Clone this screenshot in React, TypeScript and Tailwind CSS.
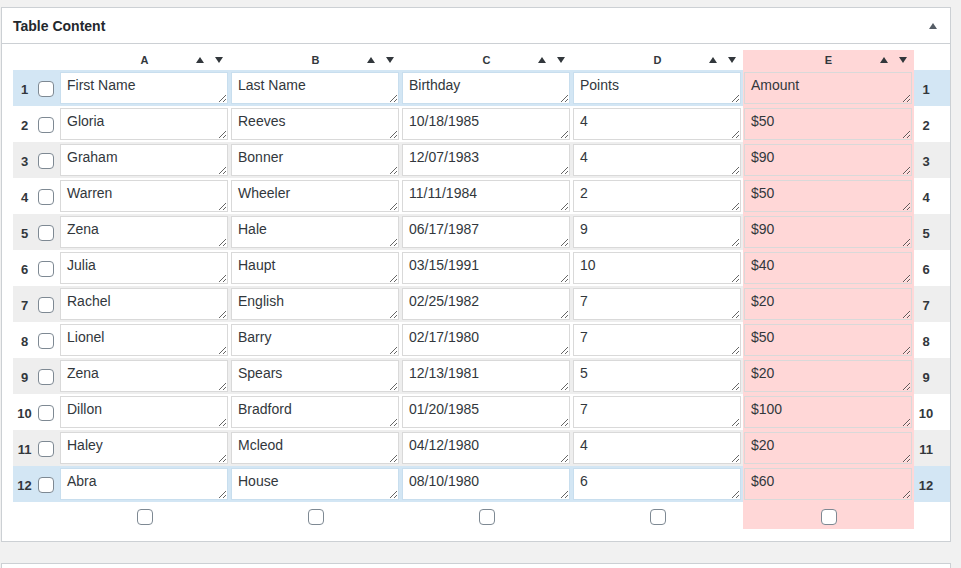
import React from 'react';

const rows: string[][] = [
    ['First Name', 'Last Name', 'Birthday', 'Points', 'Amount'],
    ['Gloria', 'Reeves', '10/18/1985', '4', '$50'],
    ['Graham', 'Bonner', '12/07/1983', '4', '$90'],
    ['Warren', 'Wheeler', '11/11/1984', '2', '$50'],
    ['Zena', 'Hale', '06/17/1987', '9', '$90'],
    ['Julia', 'Haupt', '03/15/1991', '10', '$40'],
    ['Rachel', 'English', '02/25/1982', '7', '$20'],
    ['Lionel', 'Barry', '02/17/1980', '7', '$50'],
    ['Zena', 'Spears', '12/13/1981', '5', '$20'],
    ['Dillon', 'Bradford', '01/20/1985', '7', '$100'],
    ['Haley', 'Mcleod', '04/12/1980', '4', '$20'],
    ['Abra', 'House', '08/10/1980', '6', '$60'],
];

const letters = ['A', 'B', 'C', 'D', 'E'];

const gridCols = 'grid grid-cols-[23px_23px_repeat(5,171px)_24px]';

const Checkbox: React.FC = () => (
    <input
        type="checkbox"
        className="appearance-none w-[16px] h-[16px] rounded-[4px] border border-[#7e8993] bg-white m-0 block"
    />
);

const SortArrows: React.FC = () => (
    <div className="flex items-center justify-end gap-[11px] pr-[7px]">
        <svg width="8" height="6" viewBox="0 0 8 6"><path d="M4 0 L8 6 L0 6 Z" fill="#32373c" /></svg>
        <svg width="8" height="6" viewBox="0 0 8 6"><path d="M0 0 L8 0 L4 6 Z" fill="#32373c" /></svg>
    </div>
);

const App: React.FC = () => {
    return (
        <div className="h-[568px] overflow-hidden bg-[#f1f1f1] pt-[7px] pl-px" style={{ fontFamily: '"Liberation Sans", Arial, sans-serif' }}>
            <div className="w-[950px] bg-white border border-[#ccd0d4]">
                <div className="h-[36px] flex items-center justify-between pl-[11px] pr-[13px] pt-[1px] border-b border-[#ccd0d4]">
                    <h2 className="text-[14px] font-bold text-[#23282d]">Table Content</h2>
                    <svg width="8" height="6" viewBox="0 0 8 6"><path d="M4 0 L8 6 L0 6 Z" fill="#555d66" /></svg>
                </div>

                <div className="pt-[6px] pb-[12px] pl-[11px]">
                    {/* column letters */}
                    <div className={`${gridCols} h-[20px]`}>
                        <div />
                        <div />
                        {letters.map((l, i) => (
                            <div key={l} className={`grid grid-cols-[1fr_auto_1fr] items-center ${i === 4 ? 'bg-[#ffd7d7]' : ''}`}>
                                <div />
                                <span className="text-[11px] font-bold text-[#32373c]">{l}</span>
                                <SortArrows />
                            </div>
                        ))}
                        <div />
                    </div>

                    {rows.map((r, ri) => {
                        const n = ri + 1;
                        const selected = n === 1 || n === 12;
                        const rowBg = selected ? 'bg-[#d3e6f4]' : n % 2 === 1 ? 'bg-[#eeeeee]' : 'bg-white';
                        return (
                            <div key={ri} className={`${gridCols} h-[36px] ${rowBg}`}>
                                <div className="flex items-center justify-center pt-[3px] text-[13px] font-bold text-[#32373c]">{n}</div>
                                <div className="flex items-center pl-[2px] pt-[2px]">
                                    <Checkbox />
                                </div>
                                {r.map((v, ci) => (
                                    <div key={ci} className={`py-[2px] pl-px pr-[2px] ${ci === 4 ? 'bg-[#ffd7d7]' : ''}`}>
                                        <textarea
                                            defaultValue={v}
                                            className={`block w-full h-[32px] border ${selected && ci !== 4 ? 'border-[#c8deee]' : 'border-[#d9d9d9]'} ${ci === 4 ? 'bg-[#ffd7d7]' : 'bg-white'} px-[6px] py-[2px] text-[14px] leading-[20px] text-[#32373c] overflow-hidden`}
                                        />
                                    </div>
                                ))}
                                <div className="flex items-center justify-center pt-[3px] text-[13px] font-bold text-[#32373c]">{n}</div>
                            </div>
                        );
                    })}

                    {/* column checkboxes */}
                    <div className={`${gridCols} h-[27px]`}>
                        <div />
                        <div />
                        {letters.map((l, i) => (
                            <div key={l} className={`flex justify-center pt-[7px] ${i === 4 ? 'bg-[#ffd7d7]' : ''}`}>
                                <Checkbox />
                            </div>
                        ))}
                        <div />
                    </div>
                </div>
            </div>

            <div className="mt-[21px] w-[950px] h-[40px] bg-white border border-[#ccd0d4]" />
        </div>
    );
};

export default App;
